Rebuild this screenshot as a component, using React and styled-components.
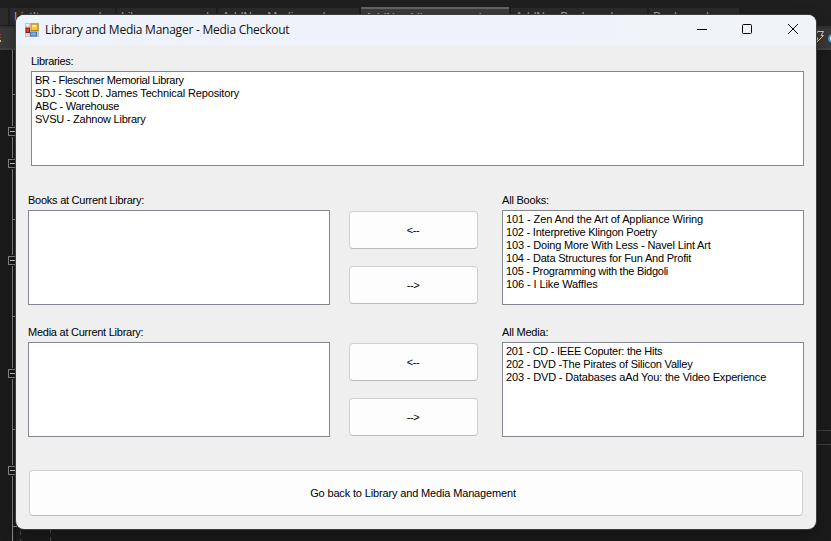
import React from "react";
import styled, { createGlobalStyle } from "styled-components";

const GlobalStyle = createGlobalStyle`
  * { box-sizing: border-box; }
  body { margin: 0; background: #1e1e1e; overflow: hidden; }
`;

const Desktop = styled.div`
  position: relative;
  display: flex;
  flex-direction: column;
  width: 831px;
  height: 541px;
  overflow: hidden;
  background: #1e1e1e;
  font-family: "Liberation Sans", Arial, sans-serif;
`;

const TabStrip = styled.div`
  display: flex;
  flex: none;
  gap: 2px;
  height: 28px;
  padding-top: 8px;
  background: #1f1f1f;
`;

const EditorTab = styled.div`
  width: ${(p) => p.$width}px;
  height: 17px;
  padding: 2px 4px 0;
  overflow: hidden;
  white-space: pre;
  font-size: 12px;
  line-height: 15px;
  color: ${(p) => (p.$active ? "#b8b8b8" : "#a2a2a2")};
  background: ${(p) => (p.$active ? "#3c3c3c" : "#2b2b2b")};
  border-top: ${(p) => (p.$active ? "2px solid #646464" : "none")};
  margin-top: ${(p) => (p.$active ? "-1px" : "0")};
`;

const EditorToolbar = styled.div`
  display: flex;
  flex: none;
  justify-content: space-between;
  height: 24px;
  margin-top: -2px;
  background: #383838;
  border-top: 2px solid #303030;
  border-bottom: 2px solid #424242;
`;

const EditorBody = styled.div`
  display: flex;
  flex: none;
  height: 491px;
  background: #1b1b1b;

  svg { display: block; flex: none; }
  svg:last-child { margin-left: auto; }
`;

const Window = styled.main`
  position: absolute;
  left: 16px;
  top: 15px;
  width: 800px;
  height: 514px;
  display: flex;
  flex-direction: column;
  overflow: hidden;
  border-radius: 8px;
  background: #efefef;
  box-shadow: 0 0 0 1px #3e3e3e, 0 5px 16px rgba(0, 0, 0, 0.35);
`;

const TitleBar = styled.header`
  display: flex;
  align-items: center;
  height: 30px;
  flex: none;
  padding-left: 9px;
  background: linear-gradient(90deg, #eef3fb 0 70%, #eef4f8 80%);
`;

const Title = styled.h1`
  flex: 1;
  margin: 0 0 0 6px;
  font: 400 12px/16px "Open Sans", "Noto Sans", sans-serif;
  letter-spacing: ${(p) => p.$spacing}px;
  color: #111;
  white-space: nowrap;
`;

const Caption = styled.button`
  display: grid;
  place-items: center;
  width: 46px;
  height: 30px;
  padding: 0 0 2px;
  border: 0;
  background: none;
`;

const Form = styled.div`
  display: flex;
  flex-direction: column;
  padding: 9px 12px 13px;
`;

const Field = styled.section`
  display: flex;
  flex-direction: column;
  width: ${(p) => p.$width}px;
  margin-left: ${(p) => p.$inset || 0}px;
`;

const Label = styled.label`
  height: 17px;
  font-size: 11px;
  line-height: 14px;
  letter-spacing: ${(p) => p.$spacing}px;
  color: #000;
  white-space: nowrap;
`;

const ListBox = styled.ul`
  height: 95px;
  margin: 0;
  padding: 2px 3px;
  list-style: none;
  border: 1px solid #828790;
  background: #fff;
`;

const Item = styled.li`
  height: 13px;
  font-size: 11px;
  line-height: 13px;
  letter-spacing: ${(p) => p.$spacing}px;
  white-space: nowrap;
  color: #000;
`;

const TransferRow = styled.div`
  display: grid;
  grid-template-columns: 302px 129px 302px;
  column-gap: 19px;
  justify-content: space-between;
  margin-top: ${(p) => p.$top}px;
`;

const MoveButtons = styled.div`
  display: flex;
  flex-direction: column;
  gap: 17px;
  padding-top: 18px;
  margin-left: -2.5px;
  margin-right: 2.5px;
`;

const Button = styled.button`
  height: 38px;
  padding: 0 1px 0 0;
  border: 1px solid #d0d0d0;
  border-bottom-color: #bababa;
  border-radius: 4px;
  background: #fdfdfd;
  color: #000;
  font: 11px/14px "Liberation Sans", Arial, sans-serif;
  letter-spacing: ${(p) => p.$spacing || 0}px;
`;

const WideButton = styled(Button)`
  height: 46px;
  margin: 33px 1px 0;
  padding-right: 6px;
`;

const TABS = [
  { text: "", width: 8 },
  { text: "ListItem.cs       d", width: 105 },
  { text: "Library.cs         d", width: 99 },
  { text: "AddNewMedia.cs d", width: 141 },
  { text: "AddNewLibrary.cs    d           ✕", width: 148, active: true },
  { text: "AddNewBook.cs d", width: 136 },
  { text: "Book.cs  d", width: 90 },
];

const LIBRARIES = [
  ["BR - Fleschner Memorial Library", -0.31],
  ["SDJ - Scott D. James Technical Repository", -0.13],
  ["ABC - Warehouse", -0.27],
  ["SVSU - Zahnow Library", -0.24],
];
const BOOKS = [
  ["101 - Zen And the Art of Appliance Wiring", -0.1],
  ["102 - Interpretive Klingon Poetry", -0.21],
  ["103 - Doing More With Less - Navel Lint Art", -0.16],
  ["104 - Data Structures for Fun And Profit", -0.2],
  ["105 - Programming with the Bidgoli", -0.27],
  ["106 - I Like Waffles", -0.1],
];
const MEDIA = [
  ["201 - CD - IEEE Coputer: the Hits", -0.25],
  ["202 - DVD -The Pirates of Silicon Valley", -0.19],
  ["203 - DVD - Databases aAd You: the Video Experience", -0.16],
];

const FormIcon = () => (
  <svg width="14" height="14" viewBox="0 0 14 14">
    <rect x="0.5" y="0.5" width="13" height="13" fill="#f0f1f2" stroke="#bcbfc3" />
    <path d="M0 3.500H5M4.500 0V14M12.500 8V14M0 11.500H5" stroke="#c9cbcd" fill="none" />
    <rect x="6" y="1" width="7" height="6.500" fill="#f8c63c" stroke="#b98512" />
    <rect x="7" y="2" width="4" height="2" fill="#ffe896" />
    <rect x="1" y="5" width="3.500" height="4.500" fill="#d8432f" stroke="#8f1f18" />
    <rect x="5.500" y="9" width="6" height="4" fill="#74aaf5" stroke="#3d70c4" />
  </svg>
);

const Gutter = () => (
  <svg width="17" height="491" viewBox="0 50 17 491" shapeRendering="crispEdges">
    <path d="M12.5 50V541" stroke="#868686" />
    <path d="M15.5 50V541" stroke="#101010" />
    <path d="M13 94.500H17M13 219.500H17M13 316.500H17M13 429.500H17M13 526.500H17" stroke="#868686" />
    {[131, 163, 260, 373, 470].map((y) => (
      <g key={y}>
        <rect x="7" y={y - 5} width="10" height="11" fill="#1b1b1b" />
        <rect x="8.500" y={y - 3.5} width="8" height="8" fill="#1b1b1b" stroke="#868686" />
        <path d={`M10 ${y - 0.5 + 1}H15`} stroke="#c8c8c8" />
      </g>
    ))}
  </svg>
);

const GuideLines = () => (
  <svg width="40" height="491" viewBox="17 50 40 491" shapeRendering="crispEdges">
    <path d="M20.500 531V541M50.500 529V541" stroke="#4d4d4d" strokeDasharray="4 4" />
  </svg>
);

const RightEdge = () => (
  <svg width="15" height="491" viewBox="816 50 15 491" shapeRendering="crispEdges">
    <path d="M816 430.500H831M816 444.500H831" stroke="#3d3d3d" />
  </svg>
);

const LeftTool = () => (
  <svg width="4" height="18" viewBox="0 0 4 18" shapeRendering="crispEdges">
    <path d="M0 6.500H1M0 9.500H1" stroke="#a8443a" />
    <path d="M0 13H1" stroke="#f0c070" strokeWidth="2" />
  </svg>
);

const RightTools = () => (
  <svg width="17" height="20" viewBox="814 28 17 20">
    <path d="M817.500 31.500H823.500L821 35.500H823.500L815.500 43.500L818 38H815Z" fill="none" stroke="#e8cf8e" />
    <circle cx="832.500" cy="38.500" r="3.500" fill="#fff" stroke="#3c96e6" strokeWidth="2" />
  </svg>
);

const Items = ({ rows }) =>
  rows.map(([text, spacing]) => (
    <Item key={text} $spacing={spacing}>{text}</Item>
  ));

const Transfer = ({ top, left, right, rows }) => (
  <TransferRow $top={top}>
    <Field $width={302}>
      <Label $spacing={-0.25}>{left}</Label>
      <ListBox />
    </Field>
    <MoveButtons>
      <Button $spacing={-0.35}>&lt;--</Button>
      <Button $spacing={-0.35}>--&gt;</Button>
    </MoveButtons>
    <Field $width={302}>
      <Label $spacing={-0.2}>{right}</Label>
      <ListBox><Items rows={rows} /></ListBox>
    </Field>
  </TransferRow>
);

export default function App() {
  return (
    <Desktop>
      <GlobalStyle />
      <TabStrip>
        {TABS.map((t) => (
          <EditorTab key={t.text} $width={t.width} $active={t.active}>{t.text}</EditorTab>
        ))}
      </TabStrip>
      <EditorToolbar>
        <LeftTool />
        <RightTools />
      </EditorToolbar>
      <EditorBody>
        <Gutter />
        <GuideLines />
        <RightEdge />
      </EditorBody>
      <Window>
        <TitleBar>
          <FormIcon />
          <Title $spacing={-0.24}>Library and Media Manager - Media Checkout</Title>
          <Caption aria-label="Minimize">
            <svg width="12" height="12" shapeRendering="crispEdges"><path d="M2 6.500H12" stroke="#000" /></svg>
          </Caption>
          <Caption aria-label="Maximize">
            <svg width="12" height="12"><rect x="1.500" y="1.500" width="9" height="9" rx="1" fill="none" stroke="#000" /></svg>
          </Caption>
          <Caption aria-label="Close">
            <svg width="12" height="12"><path d="M1 1L11 11M11 1L1 11" stroke="#000" /></svg>
          </Caption>
        </TitleBar>
        <Form>
          <Field $width={773} $inset={3}>
            <Label $spacing={-0.3}>Libraries:</Label>
            <ListBox><Items rows={LIBRARIES} /></ListBox>
          </Field>
          <Transfer top={27} left="Books at Current Library:" right="All Books:" rows={BOOKS} />
          <Transfer top={20} left="Media at Current Library:" right="All Media:" rows={MEDIA} />
          <WideButton $spacing={-0.15}>Go back to Library and Media Management</WideButton>
        </Form>
      </Window>
    </Desktop>
  );
}
